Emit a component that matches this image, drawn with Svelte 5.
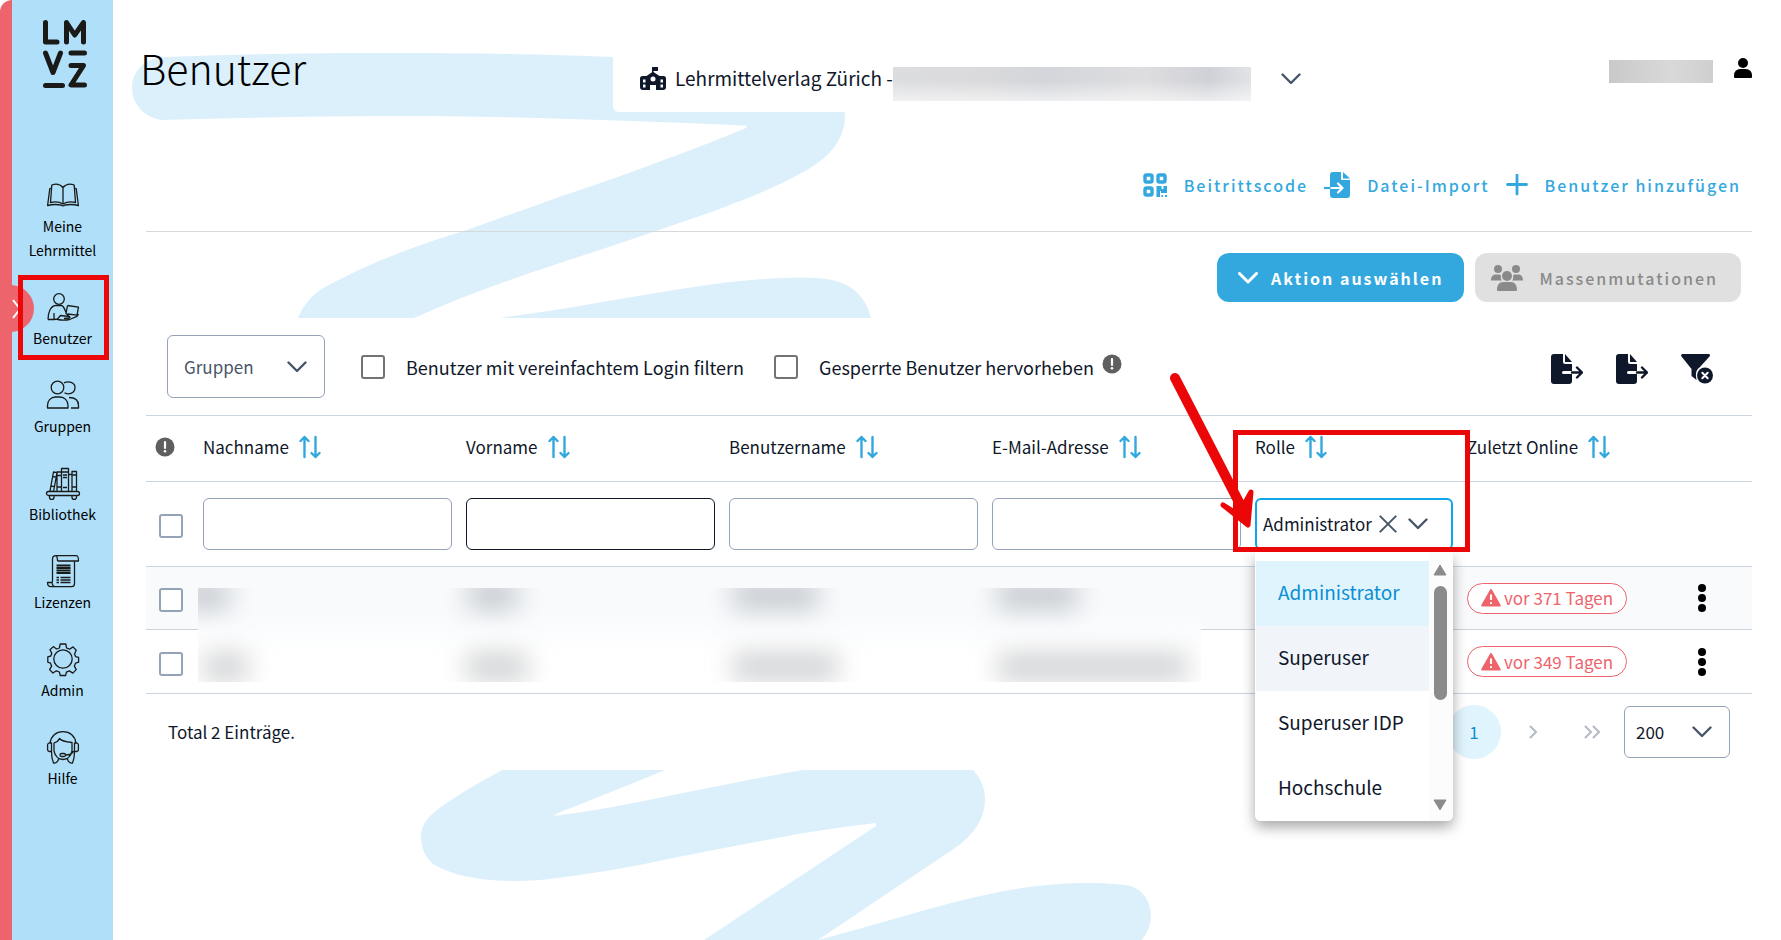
<script>
  const nav = [
    { id: 'book', label: 'Meine Lehrmittel' },
    { id: 'user', label: 'Benutzer', marked: true },
    { id: 'group', label: 'Gruppen' },
    { id: 'shelf', label: 'Bibliothek' },
    { id: 'licence', label: 'Lizenzen' },
    { id: 'gear', label: 'Admin' },
    { id: 'help', label: 'Hilfe' },
  ];
  const textColumns = ['Nachname', 'Vorname', 'Benutzername', 'E-Mail-Adresse'];
  const roles = ['Administrator', 'Superuser', 'Superuser IDP', 'Hochschule'];
  const rows = [{ days: 371 }, { days: 349 }];

  let role = $state('Administrator');
  let open = $state(true);

  function pick(r) {
    role = r;
    open = false;
  }
</script>

{#snippet chevron()}
  <svg class="chevron" viewBox="0 0 20 12" aria-hidden="true"><path d="M1.5 1.5 10 10l8.5-8.5" /></svg>
{/snippet}

{#snippet sort()}
  <svg class="sort" viewBox="0 0 22 24" aria-hidden="true">
    <path d="M5.5 22V2M1.5 6l4-4 4 4M16.500 2v20M12.500 18l4 4 4-4" />
  </svg>
{/snippet}

{#snippet info()}
  <svg class="info" viewBox="0 0 20 20" role="img" aria-label="Hinweis">
    <circle cx="10" cy="10" r="9.5" fill="#5f5f5f" />
    <path d="M10 5v6" stroke="#fff" stroke-width="2.2" stroke-linecap="round" />
    <circle cx="10" cy="14.3" r="1.3" fill="#fff" />
  </svg>
{/snippet}

{#snippet exportIcon()}
  <svg viewBox="0 0 32 30" width="32" height="30" aria-hidden="true">
    <path d="M3 0h9v8a2 2 0 0 0 2 2h7v7H12.500a1.5 1.5 0 0 0 0 3H21v7a3 3 0 0 1-3 3H3a3 3 0 0 1-3-3V3a3 3 0 0 1 3-3Z" fill="#0f172a" />
    <path d="M14 0v8h7Z" fill="#0f172a" />
    <path d="M21 18.500h10M26 13.500l5 5-5 5" fill="none" stroke="#0f172a" stroke-width="2.4" stroke-linecap="round" stroke-linejoin="round" />
  </svg>
{/snippet}

{#snippet navIcon(id)}
  <svg class="nav-icon" viewBox="0 0 32 32" aria-hidden="true">
    {#if id === 'book'}
      <path d="M16 8.5C13 5 8.5 4.5 4.8 6L3.5 23.500c4.5-1.2 9-.8 12.500 1.5 3.5-2.3 8-2.7 12.500-1.5L27.200 6C23.500 4.5 19 5 16 8.5ZM16 8.5V25M4.5 9 2.8 9.5.6 26.500c4.7-1.2 9.4-1.2 13.400-.5 1.5 1.2 2.5 1.2 4 0 4-.7 8.7-.7 13.400.5L29.200 9.5 27.500 9" />
    {:else if id === 'user'}
      <circle cx="12" cy="8" r="5.3" />
      <path d="M1 28.500c0-8 3-13.500 7.5-14h6c2 .5 3.5 4 4.5 7M1 28.500h6M7 22v6.5l3.5-.5 3-3.5c3 .5 6 .8 8 .8 1.5 0 2 1.2.5 1.7l-5 .5M10.500 28.500c4 .8 9 .8 12 0l7.5-3.2 1.5-2.3M20.500 14.500l11 1.7-1.5 8-9.5-1.2M20.500 14.500l-1.5 8 3 2.5" />
    {:else if id === 'group'}
      <circle cx="10.500" cy="8.5" r="6.3" />
      <path d="M.5 29v-2.5c0-5 3.5-8.5 8-8.5h4.5c4.5 0 8 3.5 8 8.5V29ZM17 3.8c4.500-2.300 11-.3 11 4.700 0 5.500-6 8-10.500 5.200M22 18.500c6 0 9.500 3 9.500 8V29h-7.500" />
    {:else if id === 'shelf'}
      <path d="M1.5 24.500h29a1.5 1.5 0 0 1 0 4h-29a1.5 1.5 0 0 1 0-4ZM6 24.500 3 23.800 6.5 5l3.5.7L6.6 24.500M10 24.500V5h4.500v19.500M14.500 24.500V1.500h7v23M21.500 7.500H25V24.500M25 24.500V4.500h4.500v20M10 8.500h4.500M10 20h4.500M14.500 5h7M16 8h4M16 10.500h4M16 20.500h4M25 8h4.500M25 20h4.500M5.500 9.500l3.600.7M3.800 19l3.700.7M2.500 28.500v1.700a2 2 0 0 0 4.500 0v-1.700M25 28.500v1.700a2 2 0 0 0 4.500 0v-1.700" />
    {:else if id === 'licence'}
      <path d="M9 .7h20c2 0 2.500 1 2.500 5.300H10.500M9 .7C6.500.7 5.500 2 5.500 4v22.500M9 .7c1.200.8 1.500 2 1.500 5.300M27.500 6v22.500c0 2-1.200 3.200-3 3.200H4c-2.500 0-3.500-1.700-3.500-4.200h4.500l.5-1M5 27.500c.3 3 2 4.200 4 4.200" />
      <path d="M9.500 10.500h14M9.500 13h14M9.500 15.500h14M9.500 18h14" stroke-width="1.8" />
      <path d="M9.500 22.500h2.500M9.500 25h2.500M9.500 27.500h2.500M13.500 22.500h10M13.500 25h10M13.500 27.500h10" stroke-width="1.6" />
    {:else if id === 'gear'}
      <circle cx="16" cy="16" r="9.2" />
      <path d="M13.200 1h5.600l.8 4 3 1.200 3.400-2.300 3.200 3.300-1.700 3.800 1.100 2.600 3 .8v4.800l-3 .9-1.200 3 1.800 3.500-3.400 3.500-3.400-2.200-3 1.200-.8 3.400h-5.400l-.8-3.500-3-1.200-3.500 2.200-3.300-3.400 2-3.500-1.200-3L.8 19.200v-5.400l3-.8 1-2.600L3 6.800l3.300-3.200L9.500 6l2.900-1Z" />
    {:else}
      <path d="M3 12C4 5 9 .7 16 .7S28 5 29 12M3 12H2a2 2 0 0 0-1.400 2v4.500A2 2 0 0 0 2 20.500h2.500V12ZM29 12h1a2 2 0 0 1 1.400 2v4.500a2 2 0 0 1-1.400 2h-2.500V12ZM7 20V12c3-1 4.500-2 5.500-4.500C14 9.500 20 11 25 11.500V20c-1 5-4.500 8.500-9 8.500S8 25 7 20ZM4.500 20.500c0 4 .5 8 2 11.500 3.500.5 5-2.500 5-4.500M27.500 20.500c0 4-.5 8-2 11.500-3.500.5-5-2.500-5-4.500M26.500 20c-1 2.500-3.500 4-8 4" />
      <rect x="13" y="22.500" width="5.5" height="3" rx="1.5" />
    {/if}
  </svg>
{/snippet}

<div class="page">
  <aside>
    <svg class="logo" viewBox="0 0 44 68" role="img" aria-label="LMVZ">
      <path d="M2.5 2.5v19.500H14M23.500 22V2.500l8.200 12.500L40.500 2.500V22M2.500 33l7.500 19.500L17.500 33M28 33h13.500M28 45.500h12.500L28 65h13.500M2.500 65.500h17" />
    </svg>
    <button class="toggle" aria-label="Menü öffnen">
      <svg viewBox="0 0 10 20" aria-hidden="true"><path d="M1 1l7 9-7 9" /></svg>
    </button>
    <nav>
      {#each nav as item}
        <a href="#{item.id}" class:marked={item.marked}>
          {@render navIcon(item.id)}
          <span>{item.label}</span>
        </a>
      {/each}
    </nav>
  </aside>

  <main>
    <svg class="backdrop" viewBox="113 0 1668 940" aria-hidden="true">
      <path d="M164 57C240 54 315 53 391 53C470 53 545 54 613 57L800 66C830 75 845 95 845 118C844 139 831 156 807 170C765 194 710 213 656 231C570 261 490 283 414 318H298C303 306 310 297 320 290C362 266 413 246 467 230C498 219 528 208 559 197C595 185 630 173 661 161C691 150 720 139 746 128Q748 126 745 125.500C692 123 638 121 585 119.500C520 117 455 116 391 116C315 116 238 118 161 120C144 117 132 104 132 88C132 71 145 58 164 57Z" />
      <path d="M500 318C528 314 557 310 585 305C620 299 653 293 687 288C732 281 770 277 815 278C846 279 865 292 871 318Z" />
      <path d="M504 769C478 783 457 795 437 810C425 819 421 828 421 837C421 848 425 857 433 864C453 876 481 881 516 881C530 881 545 880 558 878C596 873 632 867 668 859C703 852 738 845 772 839C806 832 841 827 876 823V826L704 940H818L955 848C975 834 985 818 985 799C985 788 981 778 972 769H809C761 777 714 787 668 796C630 804 592 811 554 816Q560 811 571 808L668 769Z" />
      <path d="M818 940C864 928 909 914 955 902C1005 889 1045 883 1094 883C1105 883 1115 884 1125 885C1143 887 1151 902 1151 916Q1151 928 1142 940Z" />
    </svg>

    <header>
      <h1>Benutzer</h1>
      <button class="school">
        <svg viewBox="0 0 26 24" width="26" height="24" aria-hidden="true">
          <path d="M12 0h6v4h-4.500v1l6 4h4a2.500 2.500 0 0 1 2.500 2.500V20a3 3 0 0 1-3 3h-7v-5h-6v5H3a3 3 0 0 1-3-3v-8.500A2.500 2.500 0 0 1 2.500 9h4L12 5.200Z" fill="#0f172a" />
          <path d="M3 12.500h2.500v3H3ZM3 17.500h2.500v3H3ZM20.500 12.500H23v3h-2.500ZM20.500 17.500H23v3h-2.500Z" fill="#fff" />
          <circle cx="13" cy="12" r="2.5" fill="#fff" />
        </svg>
        <span class="school-label">Lehrmittelverlag Zürich -</span>
        <span class="redacted"></span>
        {@render chevron()}
      </button>
      <div class="account">
        <span class="account-name"></span>
        <svg viewBox="0 0 18 20" width="18" height="20" role="img" aria-label="Konto">
          <circle cx="9" cy="5" r="5" />
          <path d="M0 19v-2a6 6 0 0 1 6-6h6a6 6 0 0 1 6 6v2a1 1 0 0 1-1 1H1a1 1 0 0 1-1-1Z" />
        </svg>
      </div>
    </header>

    <div class="links">
      <button>
        <svg viewBox="0 0 24 24" width="24" height="24" aria-hidden="true">
          <path d="M3.5 2h4A1.500 1.500 0 0 1 9 3.500v4A1.500 1.500 0 0 1 7.500 9h-4A1.500 1.500 0 0 1 2 7.500v-4A1.500 1.500 0 0 1 3.500 2ZM16.500 2h4A1.500 1.500 0 0 1 22 3.500v4A1.500 1.500 0 0 1 20.500 9h-4A1.500 1.500 0 0 1 15 7.500v-4A1.500 1.500 0 0 1 16.500 2ZM3.500 15h4A1.500 1.500 0 0 1 9 16.500v4A1.500 1.500 0 0 1 7.500 22h-4A1.500 1.500 0 0 1 2 20.500v-4A1.500 1.500 0 0 1 3.500 15Z" fill="none" stroke="currentColor" stroke-width="3.4" />
          <path d="M13.500 13h5v3h2v-3H24v7h-6v-2h-1v6h-3.500ZM18.500 22H20v2h-1.500ZM22 22h2v2h-2Z" fill="currentColor" />
        </svg>
        Beitrittscode
      </button>
      <button>
        <svg viewBox="0 0 26 26" width="26" height="26" aria-hidden="true">
          <path d="M9 0h8v7a1 1 0 0 0 1 1h8v15a3 3 0 0 1-3 3H9a3 3 0 0 1-3-3V3a3 3 0 0 1 3-3ZM19 0l7 6.500h-7Z" fill="currentColor" />
          <path d="M6 16h12M14 11.500l4.500 4.500-4.500 4.500" fill="none" stroke="#fff" stroke-width="2.2" stroke-linecap="round" stroke-linejoin="round" />
          <path d="M0 16h6.500" stroke="currentColor" stroke-width="2.2" />
        </svg>
        Datei-Import
      </button>
      <button>
        <svg viewBox="0 0 22 22" width="22" height="22" aria-hidden="true">
          <path d="M11 1v19M1.500 10.500h19" stroke="currentColor" stroke-width="2.8" stroke-linecap="round" />
        </svg>
        Benutzer hinzufügen
      </button>
    </div>

    <div class="bulk">
      <button class="primary">{@render chevron()}Aktion auswählen</button>
      <button class="muted" disabled>
        <svg viewBox="0 0 32 26" width="32" height="26" aria-hidden="true">
          <g fill="currentColor">
            <circle cx="7" cy="4" r="4" /><circle cx="25" cy="4" r="4" /><circle cx="16" cy="11" r="5" />
            <path d="M0 15.500c0-4 2-6 5-6h4l1 1.500c-.5 2 0 3.500 1 4.500ZM32 15.500c0-4-2-6-5-6h-4l-1 1.500c.5 2 0 3.500-1 4.500ZM7 26c-.8 0-1-.5-1-1 0-5 2-8 6.500-8h7c4.500 0 6.500 3 6.500 8 0 .5-.2 1-1 1Z" />
          </g>
        </svg>
        Massenmutationen
      </button>
    </div>

    <section class="card">
      <div class="filters">
        <div class="select groups">
          <select aria-label="Gruppen"><option>Gruppen</option></select>
          {@render chevron()}
        </div>
        <label><input type="checkbox" class="grey" />Benutzer mit vereinfachtem Login filtern</label>
        <label><input type="checkbox" class="grey" />Gesperrte Benutzer hervorheben</label>
        {@render info()}
        <div class="tools">
          <button aria-label="Auswahl exportieren">{@render exportIcon()}</button>
          <button aria-label="Alle exportieren">{@render exportIcon()}</button>
          <button aria-label="Filter zurücksetzen">
            <svg viewBox="0 0 32 30" width="32" height="30" aria-hidden="true">
              <path d="M1.5 0h26c1.500 0 2 1.500 1 2.500L19 13c-3 2-4.500 5-4 9l.5 4-5-4v-7L.5 2.500C-.3 1.500.3 0 1.500 0Z" fill="#0f172a" />
              <circle cx="24" cy="21.500" r="8" fill="#0f172a" />
              <path d="M21.300 18.800l5.400 5.400M26.700 18.800l-5.400 5.400" stroke="#fff" stroke-width="2" stroke-linecap="round" />
            </svg>
          </button>
        </div>
      </div>

      <div class="table-wrap">
        <table>
          <colgroup>
            <col class="c-check" /><col /><col /><col /><col /><col class="c-role" /><col class="c-online" /><col class="c-menu" />
          </colgroup>
          <thead>
            <tr class="head">
              <th class="info-cell">{@render info()}</th>
              {#each [...textColumns, 'Rolle', 'Zuletzt Online'] as title}
                <th><button>{title}{@render sort()}</button></th>
              {/each}
              <th></th>
            </tr>
            <tr class="search">
              <td class="check"><input type="checkbox" aria-label="Alle auswählen" /></td>
              {#each textColumns as title}
                <td><input type="text" class:active={title === 'Vorname'} aria-label={title} /></td>
              {/each}
              <td class="role-cell">
                <div class="role">
                  <button class="value" aria-haspopup="listbox" aria-expanded={open} onclick={() => (open = !open)}>{role}</button>
                  <button aria-label="Rolle entfernen" onclick={() => (role = '')}>
                    <svg class="clear" viewBox="0 0 20 20" aria-hidden="true"><path d="M1.5 1.5l17 17M18.500 1.500l-17 17" /></svg>
                  </button>
                  <button aria-label="Rollen anzeigen" onclick={() => (open = !open)}>{@render chevron()}</button>
                </div>
                {#if open}
                  <div class="menu">
                    <ul role="listbox" aria-label="Rolle">
                      {#each roles as r, i}
                        <li role="option" aria-selected={r === role}>
                          <button class:selected={r === role} class:focus={i === 1} onclick={() => pick(r)}>{r}</button>
                        </li>
                      {/each}
                    </ul>
                    <div class="scrollbar">
                      <svg viewBox="0 0 14 12" aria-hidden="true"><path d="M7 1l6 10H1Z" /></svg>
                      <i></i>
                      <svg viewBox="0 0 14 12" aria-hidden="true"><path d="M7 11l6-10H1Z" /></svg>
                    </div>
                  </div>
                {/if}
                <div class="marker"></div>
                <svg class="arrow" viewBox="0 0 90 164" aria-hidden="true">
                  <path d="M10 12 77 142" stroke-width="10" />
                  <path d="M58 139 83 159 86 126 78 140 71 147Z" stroke-width="5" fill="#eb0707" />
                </svg>
              </td>
              <td></td>
              <td></td>
            </tr>
          </thead>
          <tbody>
            {#each rows as row}
              <tr>
                <td class="check"><input type="checkbox" aria-label="Benutzer auswählen" /></td>
                <td></td><td></td><td></td><td></td><td></td>
                <td>
                  <span class="badge">
                    <svg viewBox="0 0 20 18" width="20" height="18" aria-hidden="true">
                      <path d="M10 1 18.800 16.500H1.200Z" fill="#ee646c" stroke="#ee646c" stroke-width="2" stroke-linejoin="round" />
                      <path d="M10 5.500v5.500M10 13.300v1.700" stroke="#fff" stroke-width="2" />
                    </svg>
                    vor {row.days} Tagen
                  </span>
                </td>
                <td class="more">
                  <button aria-label="Weitere Aktionen">
                    <svg viewBox="0 0 8 28" width="8" height="28" aria-hidden="true">
                      <circle cx="4" cy="4" r="4" /><circle cx="4" cy="14" r="4" /><circle cx="4" cy="24" r="4" />
                    </svg>
                  </button>
                </td>
              </tr>
            {/each}
          </tbody>
        </table>

        <svg class="smudge" viewBox="0 0 1003 94" preserveAspectRatio="none" aria-hidden="true">
          <defs>
            <filter id="soft" x="-50%" y="-100%" width="200%" height="300%"><feGaussianBlur stdDeviation="13 11" /></filter>
            <linearGradient id="rowfade" x2="0" y2="1">
              <stop offset="0.3" stop-color="#f8fafc" /><stop offset="0.7" stop-color="#fff" />
            </linearGradient>
          </defs>
          <rect width="1003" height="94" fill="url(#rowfade)" />
          <g filter="url(#soft)" fill="#cdd1d6">
            <rect x="-15" y="-10" width="46" height="34" /><rect x="270" y="-10" width="50" height="34" />
            <rect x="535" y="-10" width="85" height="34" /><rect x="800" y="-10" width="80" height="34" />
          </g>
          <g filter="url(#soft)" fill="#d9dadc">
            <rect x="5" y="62" width="45" height="34" /><rect x="268" y="62" width="62" height="34" />
            <rect x="535" y="62" width="105" height="34" /><rect x="800" y="62" width="190" height="34" />
          </g>
        </svg>
      </div>

      <footer>
        <span>Total 2 Einträge.</span>
        <div class="pager">
          <button class="current">1</button>
          <button aria-label="Nächste Seite"><svg viewBox="0 0 18 14" width="18" height="14"><path d="M6 1l6 6-6 6" /></svg></button>
          <button aria-label="Letzte Seite"><svg viewBox="0 0 18 14" width="18" height="14"><path d="M2 1l6 6-6 6M10 1l6 6-6 6" /></svg></button>
          <div class="select size">
            <select aria-label="Einträge pro Seite"><option>200</option></select>
            {@render chevron()}
          </div>
        </div>
      </footer>
    </section>
  </main>
</div>

<style>
  :global(body) {
    background: #fff;
  }

  .page {
    display: flex;
    min-height: 100vh;
    overflow: hidden;
    font-family: 'Noto Sans CJK SC', 'Noto Sans', sans-serif;
    font-size: 17px;
    line-height: 24px;
    color: #0f172a;
  }

  .page *,
  .page *::before {
    box-sizing: border-box;
  }

  button {
    padding: 0;
    border: 0;
    background: none;
    font: inherit;
    letter-spacing: inherit;
    color: inherit;
    cursor: pointer;
  }

  svg {
    display: block;
    flex-shrink: 0;
  }

  /* Sidebar */
  aside {
    position: relative;
    z-index: 2;
    flex: 0 0 113px;
    padding-top: 20px;
    border-left: 12px solid #ee646c;
    border-top-left-radius: 12px;
    background: #afdff9;
  }

  .logo {
    width: 44px;
    height: 68px;
    margin: 0 0 91px 31px;
    fill: none;
    stroke: #1a1a18;
    stroke-width: 5;
    stroke-linecap: round;
    stroke-linejoin: round;
  }

  .toggle {
    position: absolute;
    top: 285px;
    left: -12px;
    display: flex;
    align-items: center;
    width: 34px;
    height: 47px;
    padding-left: 12px;
    border-radius: 0 24px 24px 0;
    background: #ee646c;
  }

  .toggle svg {
    width: 10px;
    height: 20px;
    fill: none;
    stroke: #fff;
    stroke-width: 2;
  }

  nav {
    display: flex;
    flex-direction: column;
    gap: 29px;
  }

  nav a {
    position: relative;
    display: flex;
    flex-direction: column;
    align-items: center;
    gap: 3px;
    font-size: 14px;
    line-height: 24px;
    text-align: center;
    text-decoration: none;
    color: #000;
  }

  nav a.marked::before {
    content: '';
    position: absolute;
    inset: -16px 4px -10px 6px;
    border: 5px solid #eb0707;
  }

  .nav-icon {
    width: 32px;
    height: 32px;
    overflow: visible;
    fill: none;
    stroke: #1a1a18;
    stroke-width: 1.3;
    stroke-linejoin: round;
  }

  nav span {
    width: 90px;
  }

  /* Page head */
  main {
    position: relative;
    flex: 1;
    min-width: 0;
    padding: 0 29px 0 33px;
  }

  .backdrop {
    position: absolute;
    top: 0;
    left: 0;
    width: 1668px;
    height: 940px;
    fill: #dcf0fc;
  }

  header,
  .links,
  .bulk,
  .card {
    position: relative;
  }

  header {
    display: flex;
    align-items: flex-start;
    height: 112px;
    padding-top: 46px;
    margin-left: -6px;
  }

  h1 {
    flex: 0 1 473px;
    margin: 0;
    font-size: 41px;
    line-height: 42px;
    font-weight: 200;
    color: #000;
  }

  .school {
    display: flex;
    align-items: center;
    height: 66px;
    padding: 0 20px 0 27px;
    border-radius: 6px;
    background: #fff;
    font-size: 19px;
    white-space: nowrap;
  }

  .school-label {
    margin-left: 9px;
    padding-bottom: 2px;
  }

  .redacted {
    width: 358px;
    height: 34px;
    margin: 10px 30px 0 0;
    background:
      linear-gradient(transparent 40%, rgba(255, 255, 255, 0.6)),
      linear-gradient(90deg, #dcdddf, #dadadc 25%, #d3d5da 42%, #dedee0 70%, #d0d1d7 88%, #e2e3e6);
  }

  .account {
    display: flex;
    gap: 21px;
    margin-left: auto;
    padding-top: 12px;
  }

  .account-name {
    width: 104px;
    height: 23px;
    margin-top: 2px;
    background: linear-gradient(90deg, #c9c9c9, #d9d9d9 60%, #cfcfcf);
  }

  .chevron {
    width: 20px;
    height: 12px;
    fill: none;
    stroke: #475569;
    stroke-width: 2.4;
    stroke-linecap: round;
    stroke-linejoin: round;
  }

  .links,
  .bulk {
    display: flex;
    justify-content: flex-end;
    font-size: 16px;
    font-weight: 500;
    letter-spacing: 2px;
  }

  .links {
    gap: 16px;
    padding: 47px 11px 20px 0;
    border-bottom: 1px solid #d6d8da;
    color: #33a8de;
  }

  .links button,
  .bulk button {
    display: flex;
    align-items: center;
    white-space: nowrap;
  }

  .links button {
    gap: 17px;
    height: 52px;
  }

  .bulk {
    gap: 11px;
    padding: 21px 11px 16px 0;
  }

  .bulk button {
    height: 49px;
    border-radius: 12px;
  }

  .bulk .primary {
    gap: 13px;
    padding: 0 21px;
    background: #33a8de;
    color: #fff;
    font-weight: 700;
  }

  .primary .chevron {
    stroke: #fff;
    stroke-width: 3;
  }

  .bulk .muted {
    gap: 16px;
    padding: 0 23px 0 16px;
    background: #e0e0e0;
    color: #8a8a8a;
  }

  /* Card with filters, table and pager */
  .card {
    margin: 0 -29px 0 -33px;
    padding: 0 29px 0 33px;
    background: #fff;
  }

  .filters {
    display: flex;
    align-items: center;
    padding: 17px 39px 17px 21px;
    border-bottom: 1px solid #cbd5e1;
  }

  .filters label {
    display: flex;
    align-items: center;
    gap: 21px;
    margin-left: 30px;
    font-size: 18px;
    white-space: nowrap;
  }

  .filters > .info {
    margin: 0 0 6px 8px;
  }

  .tools {
    display: flex;
    gap: 33px;
    margin-left: auto;
    padding-top: 4px;
  }

  .select {
    position: relative;
    display: flex;
    align-items: center;
  }

  .select select {
    appearance: none;
    width: 100%;
    height: 100%;
    border: 1px solid #94a3b8;
    border-radius: 6px;
    background: #fff;
    font: inherit;
    color: inherit;
  }

  .select .chevron {
    position: absolute;
    right: 18px;
    pointer-events: none;
  }

  .groups {
    width: 158px;
    height: 63px;
    margin-right: 6px;
    color: #475569;
  }

  .groups select {
    padding: 0 16px;
  }

  input[type='checkbox'] {
    appearance: none;
    flex-shrink: 0;
    width: 24px;
    height: 24px;
    margin: 0;
    border: 2px solid #94a3b8;
    border-radius: 3px;
    background: #fff;
  }

  input[type='checkbox'].grey {
    border-color: #737373;
  }

  input[type='checkbox']:checked {
    background: #33a8de;
  }

  .info {
    width: 20px;
    height: 20px;
  }

  .table-wrap {
    position: relative;
  }

  table {
    width: 100%;
    table-layout: fixed;
    border-collapse: separate;
    border-spacing: 0;
  }

  .c-check {
    width: 50px;
  }

  .c-role {
    width: 212px;
  }

  .c-online {
    width: 191px;
  }

  .c-menu {
    width: 101px;
  }

  th,
  td {
    padding: 0 7px;
    border-bottom: 1px solid #cbd5e1;
    text-align: left;
    font-weight: 400;
  }

  td.check {
    padding: 4px 0 0 13px;
  }

  .check input {
    display: block;
  }

  .head th {
    height: 66px;
    padding-bottom: 4px;
  }

  .head .info-cell {
    padding-left: 9px;
  }

  .head button {
    display: flex;
    align-items: center;
    gap: 10px;
    white-space: nowrap;
  }

  .sort {
    width: 22px;
    height: 24px;
    fill: none;
    stroke: #33a8de;
    stroke-width: 2.4;
    stroke-linecap: round;
    stroke-linejoin: round;
  }

  .search td {
    height: 85px;
  }

  .search input[type='text'] {
    display: block;
    width: 100%;
    height: 52px;
    padding: 0 12px;
    border: 1px solid #94a3b8;
    border-radius: 6px;
    background: #fff;
    font: inherit;
  }

  .search input[type='text'].active {
    border-color: #0f172a;
  }

  .role-cell {
    position: relative;
  }

  .role {
    display: flex;
    align-items: center;
    height: 52px;
    padding-left: 6px;
    border: 2px solid #0ea5e9;
    border-radius: 6px;
    background: #fff;
  }

  .role button {
    margin-right: 11px;
  }

  .role .value {
    margin-right: 7px;
  }

  .clear {
    width: 18px;
    height: 18px;
    fill: none;
    stroke: #475569;
    stroke-width: 2.2;
    stroke-linecap: round;
  }

  .menu {
    position: absolute;
    z-index: 3;
    top: 70px;
    left: 7px;
    right: 7px;
    display: flex;
    padding-top: 9px;
    border-radius: 0 0 6px 6px;
    background: linear-gradient(90deg, #fff calc(100% - 24px), #fcfcfc 0);
    box-shadow: 0 6px 14px rgba(0, 0, 0, 0.35);
  }

  .menu ul {
    flex: 1;
    margin: 0;
    padding: 0 0 0 1px;
    list-style: none;
  }

  .menu li button {
    display: block;
    width: 100%;
    height: 65px;
    padding: 0 0 3px 22px;
    font-size: 19px;
    text-align: left;
    white-space: nowrap;
  }

  .menu li button.focus {
    background: #f1f5f9;
  }

  .menu li button.selected {
    background: #e0f4fd;
    color: #0a8fd4;
  }

  .scrollbar {
    display: flex;
    flex-direction: column;
    align-items: center;
    width: 24px;
    padding: 3px 2px 10px 0;
  }

  .scrollbar svg {
    width: 14px;
    height: 12px;
    fill: #8b8b8b;
    stroke: #8b8b8b;
    stroke-linejoin: round;
  }

  .scrollbar i {
    width: 13px;
    height: 114px;
    margin: 10px 0 auto;
    border-radius: 7px;
    background: #8b8b8b;
  }

  .marker {
    position: absolute;
    z-index: 4;
    inset: -52px -10px 14px -15px;
    border: 5px solid #eb0707;
    pointer-events: none;
  }

  .arrow {
    position: absolute;
    z-index: 5;
    top: -116px;
    left: -83px;
    width: 90px;
    height: 164px;
    fill: none;
    stroke: #eb0707;
    stroke-linecap: round;
    stroke-linejoin: round;
    pointer-events: none;
  }

  tbody td {
    height: 63px;
  }

  tbody tr:first-child td {
    background: #f8fafc;
  }

  tbody tr:last-child td {
    height: 64px;
  }

  .badge {
    display: inline-flex;
    align-items: center;
    gap: 3px;
    height: 31px;
    padding: 0 13px;
    border: 1px solid #ee646c;
    border-radius: 16px;
    background: #fff;
    color: #ee646c;
    white-space: nowrap;
    vertical-align: middle;
  }

  .more button {
    display: block;
    margin: 0 auto;
  }

  .smudge {
    position: absolute;
    z-index: 1;
    top: 172px;
    left: 52px;
    width: calc(62% + 7px);
    height: 94px;
  }

  footer {
    display: flex;
    align-items: center;
    justify-content: space-between;
    height: 76px;
    padding: 0 22px;
  }

  .pager {
    display: flex;
    align-items: center;
    gap: 5px;
  }

  .pager button {
    display: flex;
    align-items: center;
    justify-content: center;
    width: 54px;
    height: 54px;
    border-radius: 50%;
  }

  .pager button svg {
    fill: none;
    stroke: #b3bac4;
    stroke-width: 2;
  }

  .pager .current {
    background: #e0f4fd;
    color: #0a8fd4;
  }

  .size {
    width: 106px;
    height: 52px;
  }

  .size select {
    padding: 0 11px;
  }
</style>
